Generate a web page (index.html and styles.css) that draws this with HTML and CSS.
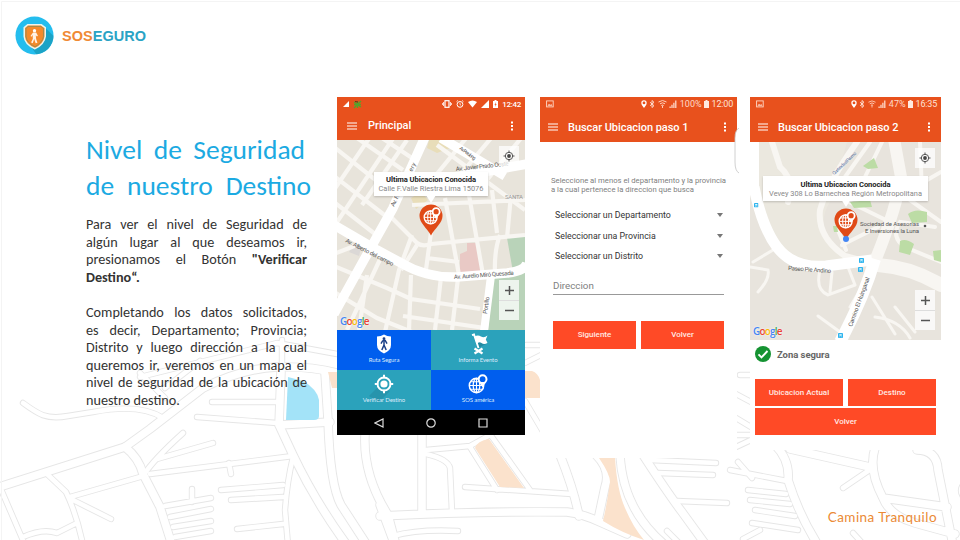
FILE: index.html
```
<!DOCTYPE html>
<html lang="es">
<head>
<meta charset="utf-8">
<title>SOSEGURO</title>
<link rel="stylesheet" href="styles.css">
</head>
<body>
<svg class="defs" width="0" height="0" aria-hidden="true">
  <defs>
    <symbol id="globe-pin" viewBox="0 0 20 20">
      <circle cx="8.500" cy="11.500" r="7.200" fill="none" stroke="currentColor" stroke-width="1.500"/>
      <ellipse cx="8.500" cy="11.500" rx="3.300" ry="7.200" fill="none" stroke="currentColor" stroke-width="1.200"/>
      <path d="M8.500 4.300V18.700M1.300 11.500H15.700M2.500 7.700H14.500M2.500 15.300H14.500" stroke="currentColor" stroke-width="1.100"/>
      <path d="M14.600 0.300a4.900 4.900 0 0 1 4.900 4.900c0 3-3.600 5-4.900 8.600c-1.300-3.600-4.900-5.600-4.900-8.600a4.900 4.900 0 0 1 4.900-4.900z" fill="currentColor"/>
      <circle cx="14.600" cy="5.200" r="2.900" fill="var(--hole)"/>
    </symbol>
    <symbol id="marker" viewBox="0 0 24 32">
      <path d="M12 .5a11.500 11.500 0 0 1 11.500 11.500c0 7-7.500 12-11.500 19.500c-4-7.500-11.500-12.500-11.500-19.500a11.500 11.500 0 0 1 11.500-11.500z" fill="#e04a17"/>
      <use href="#globe-pin" x="4" y="3" width="18" height="18"/>
    </symbol>
    <symbol id="locate" viewBox="0 0 12 12">
      <circle cx="6" cy="6" r="3.700" fill="none" stroke="#555" stroke-width="1"/>
      <circle cx="6" cy="6" r="1.900" fill="#444"/>
      <path d="M6 .5v2M6 9.500v2M.5 6h2M9.500 6h2" stroke="#555"/>
    </symbol>
    <symbol id="menu" viewBox="0 0 10 8"><path d="M0 1h10M0 4h10M0 7h10" stroke="#fff" stroke-width="1.200"/></symbol>
    <symbol id="more" viewBox="0 0 4 10"><path d="M1 .5h2v2H1zM1 4h2v2H1zM1 7.500h2v2H1z" fill="#fff"/></symbol>
    <symbol id="bus" viewBox="0 0 5 5"><rect width="5" height="5" rx=".8" fill="#2fb5ee"/><path d="M1.300 1.200h2.400v1.500H1.300z" fill="#e6f7fd"/><path d="M1.300 3.800h.8M2.900 3.800h.8" stroke="#fff" stroke-width=".6"/></symbol>
    <symbol id="signal" viewBox="0 0 8 8"><path d="M8 0v8H0z" fill="#fff"/></symbol>
    <symbol id="wifi" viewBox="0 0 10 8"><path d="M0 1.800Q5-1.800 10 1.800L5 8z" fill="#fff"/></symbol>
    <symbol id="picture" viewBox="0 0 8 8"><rect x=".6" y=".9" width="6.600" height="6" fill="none" stroke="#ffd9c8" stroke-width=".9"/><path d="M1.500 5.800l1.500-2 1.200 1.200 1-1 1.200 1.800z" fill="#ffd9c8"/></symbol>
    <symbol id="place" viewBox="0 0 6 8"><path d="M3 .2a2.700 2.700 0 0 1 2.700 2.700C5.700 5 3.800 6.300 3 8C2.200 6.300.3 5 .3 2.900A2.700 2.700 0 0 1 3 .2z" fill="#fff"/><circle cx="3" cy="2.900" r="1.400" fill="#e8511d"/></symbol>
    <symbol id="bluetooth" viewBox="0 0 6 8"><path d="M1 2.200l4 3.500L3 7.500v-7l2 1.800-4 3.500" fill="none" stroke="#ffe3d7" stroke-width=".9"/></symbol>
    <symbol id="bars" viewBox="0 0 8 8"><path d="M.5 6.500h1.200V8H.5zM2.400 4.800h1.200V8H2.400zM4.300 2.700h1.200V8H4.300zM6.200.5h1.200V8H6.200z" fill="#ffe3d7"/></symbol>
    <symbol id="wifi-faded" viewBox="0 0 9 8"><path d="M.5 2Q4.500-1 8.500 2M2 3.800q2.500-2 5 0M3.300 5.500q1.200-1 2.400 0M4.500 5.500V8" fill="none" stroke="#ffd0bc" stroke-width="1"/></symbol>
    <symbol id="battery" viewBox="0 0 5 8"><path d="M1.500 0h2v1H5v7H0V1h1.500z" fill="#ffe9df"/></symbol>
    <symbol id="chip" viewBox="0 0 5 8"><path d="M1.500 0h2v1H5v7H0V1h1.500z" fill="#fff"/><path d="M3 2L1.500 4.800h1L2 7l1.600-3h-1z" fill="#e8511d"/></symbol>
  </defs>
</svg>

<div class="slide">
  <svg class="backdrop" viewBox="0 0 960 540" aria-hidden="true">
    <defs>
      <g id="streets">
        <path d="M23 403C38 414 46 420 68 416L93 412Q140 403 163 418"/>
        <path class="wide" d="M-4 488L125 447L150 429L203 388Q240 369 277 367Q310 366 337 373"/>
        <path d="M140 377L277 343L337 354M140 373L165 398M165 388L200 361M282 340V370"/>
        <path class="wide" d="M125 447Q139 458 143 474L160 507L172 545"/>
        <path d="M143 476Q153 460 183 433M157 459L213 443M150 474L293 456M229 463L231 474"/>
        <path class="wide" d="M281 372L279 425L293 455Q316 503 347 545M279 425L330 422"/>
        <path d="M212 402H277M197 417L277 423"/>
        <path class="wide" d="M325 373L328 420Q330 485 341 505L367 545"/>
        <path d="M293 457Q287 482 285 510L288 545M221 490L283 485M231 500L283 497M237 529L283 524"/>
        <path d="M192 489V502M165 506L211 498M170 517L211 509M173 527L211 521M175 537L211 531"/>
        <path d="M0 487L25 545M47 474L66 492Q77 515 83 545M70 497L140 477M73 500L111 519M23 537Q43 528 57 533L75 524"/>
        <path class="wide" d="M365 435Q363 475 388 515L396 545"/>
        <path class="wide" d="M422 435V513M380 516Q480 511 567 512Q583 514 600 522L627 534M380 505L393 540"/>
        <path d="M393 536Q418 529 458 531M426 450L470 446L490 435M426 454Q448 459 450 468L452 512"/>
        <path d="M470 447L497 490M487 430L530 490M465 487L572 494"/>
        <path class="wide" d="M560 455Q574 490 579 516M596 455Q611 470 605 487L598 520M620 455Q623 510 665 545M643 455Q667 492 682 512L706 545"/>
        <path d="M650 460L716 463M658 473L713 475M677 501L727 503M667 531L681 545"/>
        <path d="M738 462L752 478M730 470L787 481M748 490L786 494M750 500L790 504M755 510L795 516M752 523L798 530M743 539L760 530"/>
        <path class="wide" d="M775 445Q790 460 788 480Q799 515 818 545M790 449L870 467M875 448Q868 470 883 498L947 507M917 450Q937 450 938 470L953 545M883 498Q890 516 915 523L955 534"/>
        <path d="M843 488L871 469M853 533L864 545M740 375H750M736 394L751 402M736 418L751 427M736 435H751M736 447L751 440"/>
        <path d="M526 345H541M525 363L543 354M525 401L545 435M966 482Q956 490 966 500"/>
      </g>
    </defs>
    <use href="#streets" class="street-edge"/>
    <use href="#streets" class="street-fill"/>
    <g fill="#fbe2cc">
      <path d="M475 448Q477 441 489 439L524 488L500 487zM599 458H615Q617 490 625 508Q633 527 644 540Q622 533 603 521Q607 504 610 482Q610 474 599 458zM525 371H532Q538 373 540 380V398H525zM328 372H337V388H332z"/>
    </g>
    <path d="M288 377L303 381Q317 389 319 400V416Q319 420 314 420H286z" fill="#a3e3f8"/>
    <path d="M1.500 540V1.500H960" fill="none" stroke="#f4f4f4"/>
  </svg>

  <header class="brand">
    <svg class="brand-logo" viewBox="0 0 40 40">
      <defs><clipPath id="disc"><circle cx="20" cy="20" r="19.500"/></clipPath></defs>
      <circle cx="20" cy="20" r="19.500" fill="#24bdee"/>
      <path d="M29 10L45 26V45H26L16 31z" fill="#1ba3c6" clip-path="url(#disc)"/>
      <path d="M13 9H27L31 12V21Q30 29 20.500 33.500Q10 29 9.500 21V12z" fill="#f58a2b" stroke="#edf5ed" stroke-width="1.600"/>
      <path d="M13.500 10.700H26.500L29.300 13V21Q28 27.500 20.500 31.500Q12 27.500 11.300 21V13z" fill="none" stroke="#8b8957" stroke-width=".8"/>
      <circle cx="20" cy="15" r="1.700" fill="#fff"/>
      <path d="M18.500 17h3.200l1.800 3.200-1 .8-1.200-1.200.4 3.700 1.300 4-1.800.5-1.500-4.500-1.500 4.500-1.700-.7 1.800-4-.2-3.700-1.200 1.600-1-.8z" fill="#fff3e7"/>
    </svg>
    <span class="brand-name"><b>SOS</b>EGURO</span>
  </header>

  <main class="content">
    <section class="copy">
      <h1><span class="h-a">Nivel de Seguridad</span><span class="h-b">de nuestro Destino</span></h1>
      <p>
        <span>Para ver el nivel de Seguridad de</span>
        <span>algún lugar al que deseamos ir,</span>
        <span>presionamos el Botón <b>"Verificar</b></span>
        <span class="end"><b>Destino“.</b></span>
      </p>
      <p>
        <span>Completando los datos solicitados,</span>
        <span>es decir, Departamento; Provincia;</span>
        <span>Distrito y luego dirección a la cual</span>
        <span>queremos ir, veremos en un mapa el</span>
        <span>nivel de seguridad de la ubicación de</span>
        <span class="end">nuestro destino.</span>
      </p>
    </section>

    <section class="phone phone-main">
      <div class="status">
        <svg width="6" height="6"><use href="#signal"/></svg>
        <svg class="bug" width="9" height="9" viewBox="0 0 9 9"><path d="M1 2L8 7M8 1L1 8M1 4.500H8M4.500 1V8" stroke="#55a32c" stroke-width="1.300"/><path d="M2 1.500L5 2" stroke="#6d2a16"/></svg>
        <span class="grow"></span>
        <svg width="10" height="8" viewBox="0 0 10 8"><rect x="3" y=".7" width="4" height="6.600" fill="none" stroke="#fff" stroke-width="1.200"/><path d="M1.500 2v4M8.500 2v4M.4 3v2M9.600 3v2" stroke="#fff" stroke-width=".8"/></svg>
        <svg width="8" height="8" viewBox="0 0 8 8"><circle cx="4" cy="4.400" r="2.900" fill="none" stroke="#fff"/><path d="M4 2.800v1.800l1.200.7M.5 1.700L2 .4M7.500 1.700L6 .4" fill="none" stroke="#fff" stroke-width=".8"/></svg>
        <svg width="9" height="8"><use href="#wifi"/></svg>
        <svg width="8" height="8"><use href="#signal"/></svg>
        <svg width="5" height="8"><use href="#chip"/></svg>
        <span class="clock">12:42</span>
      </div>
      <div class="appbar"><svg class="ico-menu"><use href="#menu"/></svg><strong>Principal</strong><svg class="ico-more"><use href="#more"/></svg></div>
      <div class="map">
        <svg class="tiles-art" viewBox="0 0 188 190">
          <rect width="188" height="190" fill="#e8e4db"/>
          <path d="M92 0H113V8L100 13L90 8zM74 58L84 52L91 60L79 69z" fill="#e8ddb9"/>
          <path d="M123 120V114L130 111V103H141L145 132H123z" fill="#e9c9c5"/>
          <path d="M170 98L188 95V128L176 132zM157 137L188 133V190H151z" fill="#b9d3b9"/>
          <path d="M15 107L25 104L22 116L12 112z" fill="#dbd8d6"/>
          <g class="lane">
            <path d="M-3 7L50 49M20 -2L66 30M45 -2L75 18M-3 36L50 77M-3 62L38 94M33 -3L-3 50M57 -3L0 82M70 0L25 65"/>
            <path d="M100 5L188 70M75 65L188 60M55 78L80 103Q85 107 94 104L188 95M108 58L122 135M132 55L146 135M155 50L160 93M163 95Q157 110 158 135M174 55L170 98"/>
            <path d="M155 -3L112 48M185 -3L150 40M130 -3L95 40M95 85L88 137M90 118L122 122M95 65V85M75 95L62 130L48 192M64 130L80 105M-3 114L20 105"/>
            <path d="M-3 126L50 148L74 159L143 169M-3 152L40 178L75 192M66 176L148 188M74 135L72 190M104 137L98 190M121 138L115 190M45 115L10 190M30 135L22 190"/>
          </g>
          <g class="avenue">
            <path d="M88 -3L56 68L28 118L-3 174"/><path d="M104 -2L168 36M190 24L112 38"/>
            <path d="M-3 85L40 110L66 124Q90 138 120 137L170 133Q188 131 190 123"/><path d="M154 136L147 192" stroke-width="8"/>
          </g>
          <g class="map-label">
            <text transform="translate(122 9) rotate(36)" textLength="19" style="font-size:5px">Av. Perulong</text>
            <text transform="translate(119 31) rotate(-6)" textLength="53">Av. Javier Prado Oeste</text>
            <text x="168" y="59" textLength="18" fill="#999">SANTA</text>
            <text transform="translate(57 67) rotate(-63)" textLength="12">Av. F.</text>
            <text transform="translate(75 32) rotate(-63)" textLength="9">ery</text>
            <text transform="translate(8 102) rotate(27)" textLength="53">Av. Alberto del campo</text>
            <text transform="translate(117 139) rotate(-4)" textLength="60">Av. Aurelio Miró Quesada</text>
            <text transform="translate(150 174) rotate(-82)" textLength="17">Portillo</text>
          </g>
        </svg>
        <div class="bubble bubble-a"><strong>Ultima Ubicacion Conocida</strong><span>Calle F.Valle Riestra Lima 15076</span></div>
        <svg class="marker marker-a"><use href="#marker"/></svg>
        <div class="locate"><svg width="12" height="12"><use href="#locate"/></svg></div>
        <div class="zoom"><span><svg viewBox="0 0 9 9"><path d="M4.500 0v9M0 4.500h9"/></svg></span><span><svg viewBox="0 0 9 9"><path d="M0 4.500h9"/></svg></span></div>
        <div class="google"><i class="b">G</i><i class="r">o</i><i class="y">o</i><i class="b">g</i><i class="g">l</i><i class="r">e</i></div>
      </div>
      <div class="actions">
        <div class="action blue">
          <svg viewBox="0 0 20 20"><path d="M3 2.500Q7 2.500 10 .5Q13 2.500 17 2.500V11Q17 16.500 10 19.500Q3 16.500 3 11z" fill="#fff"/><circle cx="10" cy="4.700" r="1.400" fill="#1a3f87"/><path d="M8.800 6.500h2.400l1.800 3.200M8.800 6.500L7 9.700M10 6.500V11L7.800 16M10 11l2.200 5" fill="none" stroke="#1a3f87" stroke-width="1.500"/></svg>
          <span>Ruta Segura</span></div>
        <div class="action teal">
          <svg viewBox="0 0 20 20"><path d="M8.500 10Q12 7 14 9L20 9L11 13.500z" fill="#258ba2"/><path d="M4 1.200l2-.7L10.500 14" fill="none" stroke="#fff" stroke-width="1.900"/><path d="M6.500 2.500Q10 .5 13 2.500T19.500 1.500L17.800 5.500L19.500 9Q16 11 13.500 9T8.500 10z" fill="#fff"/><path d="M6.500 14.500l8 5M14.500 14.500l-8 5" stroke="#fff" stroke-width="2.200"/></svg>
          <span>Informa Evento</span></div>
        <div class="action teal">
          <svg viewBox="0 0 20 20"><path d="M3 14L-5 22L5 28L16 17z" fill="#258ba2" opacity=".6"/><circle cx="10" cy="10" r="6.500" fill="none" stroke="#fff" stroke-width="1.900"/><circle cx="10" cy="10" r="3.600" fill="#fff"/><path d="M10 .8v3.500M10 15.700v3.500M.8 10h3.500M15.700 10h3.500" stroke="#fff" stroke-width="2"/></svg>
          <span>Verificar Destino</span></div>
        <div class="action blue"><svg viewBox="0 0 20 20"><use href="#globe-pin"/></svg><span>SOS américa</span></div>
      </div>
      <div class="navbar">
        <svg viewBox="0 0 10 10"><path d="M9 1v8L1 5z"/></svg><svg viewBox="0 0 10 10"><circle cx="5" cy="5" r="4.200"/></svg><svg viewBox="0 0 10 10"><path d="M1 1h8v8H1z"/></svg>
      </div>
    </section>

    <section class="phone phone-form">
      <div class="status">
        <svg width="8" height="8"><use href="#picture"/></svg><span class="grow"></span>
        <svg width="6" height="8"><use href="#place"/></svg><svg width="6" height="8"><use href="#bluetooth"/></svg><svg width="9" height="8"><use href="#wifi-faded"/></svg><svg width="8" height="8"><use href="#bars"/></svg>
        <span class="pct">100%</span><svg width="5" height="8"><use href="#battery"/></svg><span class="clock soft">12:00</span>
      </div>
      <div class="appbar"><svg class="ico-menu"><use href="#menu"/></svg><strong>Buscar Ubicacion paso 1</strong><svg class="ico-more"><use href="#more"/></svg></div>
      <div class="form">
        <p class="hint">Seleccione al menos el departamento y la provincia<br>a la cual pertenece la direccion que busca</p>
        <div class="select"><span>Seleccionar un Departamento</span><i></i></div>
        <div class="select"><span>Seleccionar una Provincia</span><i></i></div>
        <div class="select"><span>Seleccionar un Distrito</span><i></i></div>
        <div class="field">Direccion</div>
        <div class="buttons"><span class="btn">Siguiente</span><span class="btn">Volver</span></div>
      </div>
      <svg class="edge" viewBox="0 0 6 48"><path d="M6 0Q1 2 1 10V34Q1 43 6 46z" fill="#fff"/><path d="M5 0Q1 2 1 10V34Q1 43 5 45" fill="none" stroke="#c4c4c4" stroke-width=".8"/></svg>
    </section>

    <section class="phone phone-result">
      <div class="status">
        <svg width="8" height="8"><use href="#picture"/></svg><span class="grow"></span>
        <svg width="6" height="8"><use href="#place"/></svg><svg width="6" height="8"><use href="#bluetooth"/></svg><svg width="8" height="8"><use href="#wifi-faded"/></svg><svg width="8" height="8"><use href="#bars"/></svg>
        <span class="pct">47%</span><svg width="5" height="8"><use href="#battery"/></svg><span class="clock soft">16:35</span>
      </div>
      <div class="appbar"><svg class="ico-menu"><use href="#menu"/></svg><strong>Buscar Ubicacion paso 2</strong><svg class="ico-more"><use href="#more"/></svg></div>
      <div class="map">
        <svg class="tiles-art" viewBox="0 0 191 198">
          <rect width="191" height="198" fill="#e8e4dd"/>
          <path d="M9 0H97L80 60Q67 80 80 103L105 118Q75 127 48 117Q18 100 9 60z" fill="#ebe8df"/>
          <g fill="none" stroke="#f8f6f2" stroke-linecap="round">
            <path d="M22 0L30 25Q45 38 38 60M107 0Q78 40 70 68Q67 95 95 114L118 120" stroke-width="6"/>
            <path d="M144 -3L151 35Q147 65 125 119" stroke-width="12"/><path d="M128 123Q160 125 191 143" stroke-width="14"/>
            <path d="M120 0L95 35M132 0L115 35M170 0L172 50M95 58L140 80M160 58L191 80M185 85L150 80Q140 95 155 105L191 120M128 85L92 103M88 88L96 108M191 30L165 45" stroke-width="4"/>
            <path d="M70 128Q65 148 78 153L105 143M82 130L80 150M98 125L105 143M0 125L18 128Q20 137 8 150M3 120L28 105M68 174L90 190M100 165L118 135M122 155L145 192M145 165L165 190M125 175Q150 178 160 196" stroke-width="3"/>
          </g>
          <path d="M-2 0H9V52H-2z" fill="#fff"/>
          <path d="M4 45Q12 85 27 105Q44 127 76 124L122 118" fill="none" stroke="#fff" stroke-width="11"/>
          <path d="M125 117Q114 155 90 200" fill="none" stroke="#fff" stroke-width="12"/>
          <path d="M113 24L124 16L128 26L118 27zM100 60L120 58L122 65L104 66zM158 72Q165 66 177 70V80L162 81zM150 99Q156 96 164 102L160 113L149 110zM183 109L191 108V120L184 118zM83 84L87 84L88 90H84z" fill="#bcdca5"/>
          <g class="map-label">
            <text transform="translate(84 33) rotate(-43)" textLength="31" fill="#5874a5" style="font-size:4.500px">Quebrada el Peumo</text>
            <text x="110" y="83.500" textLength="59">Sociedad de Asesorias</text>
            <text x="115" y="90.500" textLength="54">E Inversiones la Luna</text>
            <text transform="translate(38 128) rotate(4)" textLength="43">Paseo Pie Andino</text>
            <text transform="translate(102 185) rotate(-70)" textLength="52">Camino El Huinganal</text>
          </g>
          <circle cx="175" cy="84" r="1.300" fill="#555"/>
          <use href="#bus" x="4" y="61" width="4.500" height="4.500"/><use href="#bus" x="109" y="116" width="5" height="5"/><use href="#bus" x="108" y="125" width="5" height="5"/><use href="#bus" x="88" y="191" width="5" height="5"/>
        </svg>
        <div class="bubble bubble-b"><strong>Ultima Ubicacion Conocida</strong><span>Vevey 308 Lo Barnechea Región Metropolitana</span></div>
        <svg class="marker marker-b"><use href="#marker"/></svg><i class="me"></i>
        <div class="locate"><svg width="12" height="12"><use href="#locate"/></svg></div>
        <div class="zoom"><span><svg viewBox="0 0 9 9"><path d="M4.500 0v9M0 4.500h9"/></svg></span><span><svg viewBox="0 0 9 9"><path d="M0 4.500h9"/></svg></span></div>
        <div class="google"><i class="b">G</i><i class="r">o</i><i class="y">o</i><i class="b">g</i><i class="g">l</i><i class="r">e</i></div>
      </div>
      <div class="zone"><svg viewBox="0 0 16 16"><circle cx="8" cy="8" r="8" fill="#159332"/><path d="M3.500 8.300l3 3 6-6.300" fill="none" stroke="#fff" stroke-width="1.900"/></svg><strong>Zona segura</strong></div>
      <div class="result-buttons"><span class="btn">Ubicacion Actual</span><span class="btn">Destino</span><span class="btn full">Volver</span></div>
    </section>
  </main>

  <footer class="tagline">Camina Tranquilo</footer>
</div>
</body>
</html>
```

FILE: styles.css
```
* { box-sizing: border-box; }
body { margin: 0; background: #fff; font-family: Roboto, "Liberation Sans", sans-serif; }
svg { display: block; flex: none; }
i { font-style: normal; }
.defs { position: absolute; }

.slide { position: relative; width: 960px; height: 540px; overflow: hidden; display: flex; flex-direction: column; }
.backdrop { position: absolute; inset: 0; width: 960px; height: 540px; }
.street-edge, .street-fill { fill: none; stroke-linecap: round; stroke-linejoin: round; }
.street-edge { stroke: #e6e6e6; --lane: 6.4px; --road: 9.4px; }
.street-fill { stroke: #fff; --lane: 4.6px; --road: 7.6px; }
#streets path { stroke-width: var(--lane); }
#streets .wide { stroke-width: var(--road); }

.brand { position: relative; display: flex; align-items: center; gap: 8px; height: 97px; padding: 0 0 26px 15px; }
.brand-logo { width: 39px; height: 39px; }
.brand-name { font: bold 14.5px "Liberation Sans", sans-serif; color: #2aa3c5; letter-spacing: .05px; }
.brand-name b { color: #f08a35; }

.content { position: relative; display: flex; align-items: flex-start; padding-left: 86px; }

.copy { width: 251px; padding-top: 35px; font-family: Calibri, Carlito, Lato, sans-serif; color: #333; }
h1 { margin: 0 0 12px; font-size: 27.5px; font-weight: 400; line-height: 36px; color: #1caae2; white-space: nowrap; }
h1 span { display: block; text-align-last: justify; }
.h-a { width: 219px; }
.h-b { width: 225px; }
.copy p { width: 221px; margin: 0 0 17.600px; font-size: 14.200px; line-height: 17.600px; }
.copy p span { display: block; white-space: nowrap; text-align: justify; text-align-last: justify; }
.copy p .end { text-align-last: left; }

.phone { position: relative; flex: none; display: flex; flex-direction: column; background: #fff; }
.phone-main { width: 188px; height: 338px; margin-right: 15px; }
.phone-form { width: 197px; height: 361px; margin-right: 13px; }
.phone-result { width: 191px; height: 353px; }

.status { height: 14px; display: flex; align-items: center; gap: 4px; padding: 0 4px 0 6px; background: #e8511d; color: #fff; font-size: 8px; }
.grow { flex: 1; }
.clock { font-weight: 500; font-size: 8px; letter-spacing: -.3px; }
.soft { font-weight: 400; font-size: 9px; color: #ffe3d7; letter-spacing: -.2px; }
.pct { font-size: 9px; color: #ffd9c8; }
.phone-form .status, .phone-result .status { gap: 2.500px; }

.appbar { height: 29px; display: flex; align-items: center; padding: 0 11px 0 10px; background: #e8511d; color: #fff; }
.appbar strong { flex: 1; margin-left: 11px; font-size: 11px; font-weight: 500; white-space: nowrap; }
.ico-menu { width: 10px; height: 8px; }
.ico-more { width: 4px; height: 10px; }
.phone-form .appbar, .phone-result .appbar { height: 31px; padding: 1px 10px 0 8px; }
.phone-form .appbar strong, .phone-result .appbar strong { margin-left: 10px; letter-spacing: -.05px; }

.map { position: relative; overflow: hidden; }
.phone-main .map { height: 190px; }
.phone-result .map { height: 198px; }
.tiles-art { width: 100%; height: 100%; }
.lane { fill: none; stroke: #f8f6f2; stroke-width: 4.200px; }
.avenue { fill: none; stroke: #fff; stroke-width: 9.500px; }
.map-label { font-size: 6px; fill: #555; }

.bubble { position: absolute; height: 24px; display: flex; flex-direction: column; align-items: center; justify-content: center; background: #fff; box-shadow: 0 1px 2px rgba(0,0,0,.2); white-space: nowrap; line-height: 9px; }
.bubble::after { content: ""; position: absolute; top: 23px; left: 50%; margin-left: -5px; border: 5px solid transparent; border-top: 8px solid #fff; }
.bubble strong { font-size: 7.600px; font-weight: 700; color: #222; letter-spacing: -.08px; }
.bubble span { font-size: 7.400px; color: #888; }
.bubble-a { left: 37px; top: 32px; width: 114px; }
.bubble-b { left: 13px; top: 34px; width: 165px; height: 25px; }
.marker { position: absolute; width: 24px; height: 32px; color: #fff; --hole: #e04a17; }
.marker-a { left: 82px; top: 64px; }
.marker-b { left: 84px; top: 66px; }
.me { position: absolute; left: 92.500px; top: 93.500px; width: 6px; height: 6px; border-radius: 50%; background: #4285f4; }
.locate { position: absolute; top: 6px; right: 6px; width: 20px; height: 20px; display: grid; place-items: center; background: rgba(255,255,255,.75); }
.zoom { position: absolute; right: 6px; bottom: 10px; width: 20px; height: 40px; display: grid; grid-template-rows: 1fr 1fr; background: rgba(255,255,255,.75); }
.zoom span { display: grid; place-items: center; }
.zoom span + span { border-top: 1px solid #ddd; }
.zoom svg { width: 9px; height: 9px; stroke: #555; stroke-width: 1.500px; }
.google { position: absolute; left: 3px; bottom: 2px; font: 600 10px/14px "Open Sans", sans-serif; letter-spacing: -.8px; text-shadow: 0 0 2px #fff; }
.google .b { color: #4285f4; } .google .r { color: #ea4335; } .google .y { color: #fbbc05; } .google .g { color: #34a853; }

.actions { display: grid; grid-template-columns: 1fr 1fr; grid-auto-rows: 40px; }
.action { display: flex; flex-direction: column; align-items: center; padding-top: 4px; color: #fff; --hole: #005eee; overflow: hidden; }
.action svg { width: 20px; height: 20px; overflow: visible; }
.action span { margin-top: 2px; font: 6px/8px Lato, sans-serif; letter-spacing: -.1px; white-space: nowrap; color: #dcebfb; }
.blue { background: #005eee; }
.teal { background: #2ba2bb; }
.navbar { height: 25px; display: flex; justify-content: space-between; align-items: center; padding: 0 37px; background: #000; }
.navbar svg { width: 10px; height: 10px; fill: none; stroke: #ddd; stroke-width: 1.200px; }

.form { padding: 34px 13px 0; }
.hint { margin: 0 0 11px -2px; font-size: 7.700px; line-height: 9px; color: #808080; white-space: nowrap; }
.select { height: 20.500px; display: flex; align-items: center; justify-content: space-between; padding: 0 1px 0 2px; font-size: 8.800px; color: #333; }
.select i { border: 3px solid transparent; border-top: 4px solid #777; border-bottom: 0; }
.field { height: 22px; margin-top: 6px; border-bottom: 1px solid #999; padding-top: 7px; font-size: 9.800px; line-height: 12px; color: #808080; }
.btn { display: grid; place-items: center; background: #ff4a26; color: #ffe9e3; font-size: 8px; font-weight: 500; }
.buttons { display: grid; grid-template-columns: 1fr 1fr; grid-auto-rows: 28px; gap: 5px; margin-top: 26px; }
.edge { position: absolute; left: 194px; top: 31px; width: 6px; height: 48px; }

.zone { height: 28px; display: flex; align-items: center; gap: 6px; padding-left: 5px; }
.zone svg { width: 16px; height: 16px; }
.zone strong { font-size: 9.500px; font-weight: 700; letter-spacing: -.05px; color: #666; }
.result-buttons { display: grid; grid-template-columns: 88px 88px; grid-auto-rows: 26.500px; gap: 2.500px 5px; padding: 11px 5px 0; }
.full { grid-column: 1 / -1; }

.tagline { position: absolute; right: 23px; bottom: 14px; font: 13.500px/18px Lato, sans-serif; letter-spacing: .45px; color: #eb8a35; }
```
